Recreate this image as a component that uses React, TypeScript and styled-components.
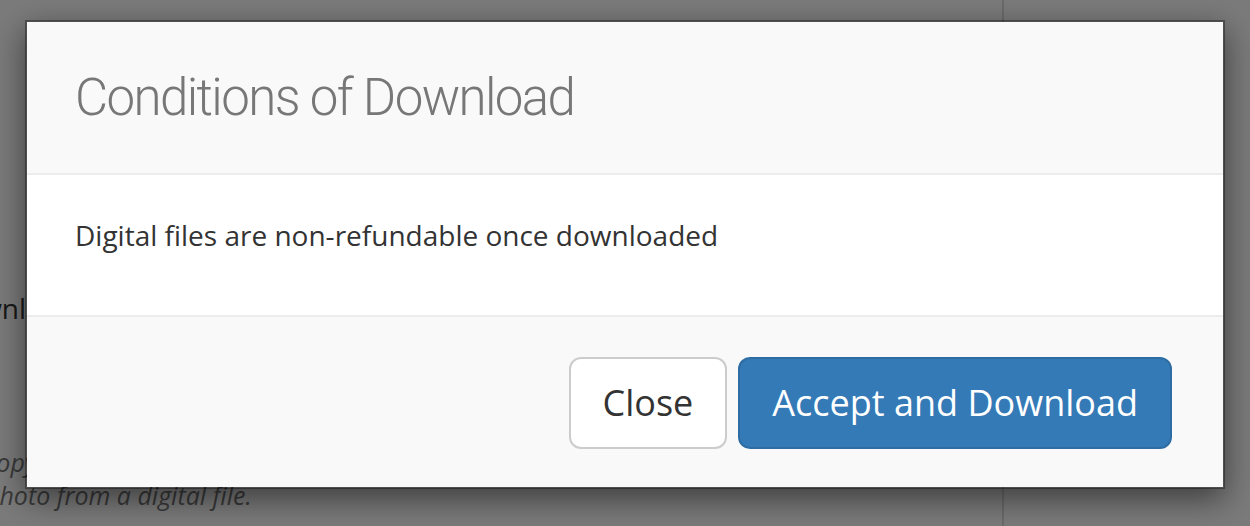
import React from "react";
import styled, { createGlobalStyle } from "styled-components";

const GlobalStyle = createGlobalStyle`
  html, body {
    margin: 0;
    padding: 0;
    width: 1250px;
    height: 526px;
    overflow: hidden;
    font-family: "Open Sans", "Liberation Sans", sans-serif;
  }
  * { box-sizing: border-box; }
`;

const Page = styled.div`
  width: 1250px;
  height: 526px;
  background: #ffffff;
  display: flex;
`;

const MainColumn = styled.div`
  flex: 0 0 1164px;
  margin-left: -160px;
  border-right: 2px solid #dddddd;
  padding: 288px 0 0 145px;
  display: flex;
  flex-direction: column;
`;

const SideColumn = styled.div`
  flex: 1;
`;

const BackLabel = styled.div`
  font-size: 28px;
  line-height: 40px;
  color: #333;
  margin-left: -42px;
  white-space: nowrap;
`;

const BackNote = styled.div`
  margin-top: 118px;
  font-size: 25px;
  line-height: 33px;
  font-style: italic;
  color: #777;
  white-space: nowrap;
`;

const Overlay = styled.div`
  position: fixed;
  inset: 0;
  background: rgba(0, 0, 0, 0.52);
  display: flex;
  justify-content: center;
  align-items: flex-start;
  padding-top: 20px;
`;

const Modal = styled.div`
  width: 1200px;
  background: #ffffff;
  background-clip: padding-box;
  border: 2px solid rgba(0, 0, 0, 0.35);
  box-shadow: 0 10px 30px rgba(0, 0, 0, 0.5);
  display: flex;
  flex-direction: column;
`;

const Header = styled.div`
  background: #f9f9f9;
  padding: 40px 48px;
  border-bottom: 2px solid #ececec;
`;

const Title = styled.h4`
  margin: 0;
  font-family: Roboto, "Liberation Sans", sans-serif;
  font-weight: 300;
  font-size: 51px;
  line-height: 71px;
  letter-spacing: -1.6px;
  color: #777777;
`;

const Body = styled.div`
  padding: 40px 48px;
  background: #ffffff;
`;

const Text = styled.p`
  margin: 0 0 20px;
  font-size: 28px;
  line-height: 40px;
  color: #333333;
`;

const Footer = styled.div`
  background: #f9f9f9;
  border-top: 2px solid #ececec;
  padding: 40px 51px 38px 48px;
  display: flex;
  justify-content: flex-end;
  gap: 11px;
`;

const Button = styled.button<{ $primary?: boolean }>`
  font-family: "Open Sans", "Liberation Sans", sans-serif;
  font-size: 36px;
  line-height: 48px;
  padding: 20px 32px;
  border-radius: 12px;
  border: 2px solid ${(p) => (p.$primary ? "#2e6da4" : "#cccccc")};
  background: ${(p) => (p.$primary ? "#337ab7" : "#ffffff")};
  color: ${(p) => (p.$primary ? "#ffffff" : "#333333")};
  cursor: pointer;
`;

export default function App() {
  return (
    <>
      <GlobalStyle />
      <Page>
        <MainColumn>
          <BackLabel>Download this photo</BackLabel>
          <BackNote>
            copy of the photo
            <br />
            photo from a digital file.
          </BackNote>
        </MainColumn>
        <SideColumn />
      </Page>
      <Overlay>
        <Modal>
          <Header>
            <Title>Conditions of Download</Title>
          </Header>
          <Body>
            <Text>Digital files are non-refundable once downloaded</Text>
          </Body>
          <Footer>
            <Button>Close</Button>
            <Button $primary>Accept and Download</Button>
          </Footer>
        </Modal>
      </Overlay>
    </>
  );
}
